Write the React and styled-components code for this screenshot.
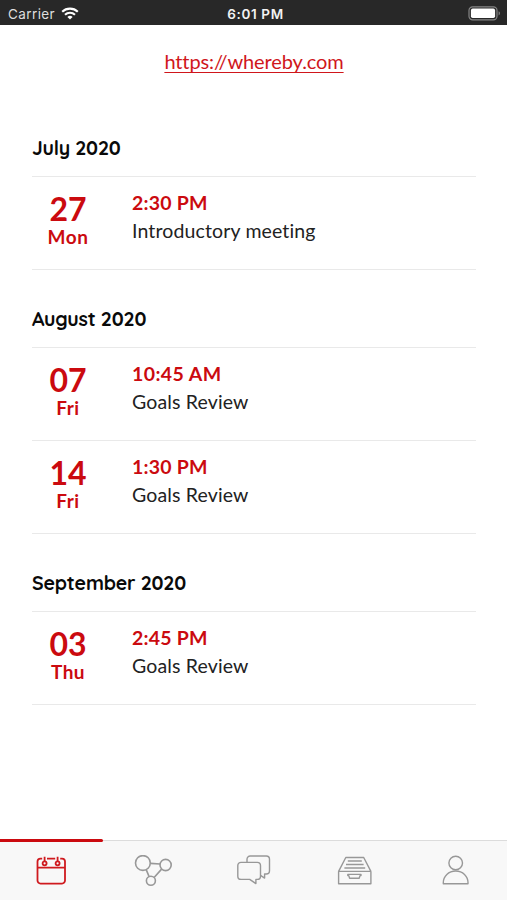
import React, { useState } from "react";
import styled, { createGlobalStyle } from "styled-components";

const GlobalStyle = createGlobalStyle`
  * {
    box-sizing: border-box;
  }
  body {
    margin: 0;
    background: #fff;
    font-family: Avenir, Lato, sans-serif;
    font-variant-ligatures: none;
  }
`;

const Screen = styled.div`
  display: flex;
  flex-direction: column;
  height: 900px;
  background: #fff;
  overflow: hidden;
`;

const StatusBar = styled.header`
  display: grid;
  grid-template-columns: 1fr auto 1fr;
  align-items: center;
  height: 25px;
  padding: 2px 6px 0 8px;
  background: #282828;
  color: #f2f2f2;
  font-family: Inter, sans-serif;
  font-size: 13px;
  flex-shrink: 0;
`;

const Carrier = styled.div`
  display: flex;
  align-items: center;
  gap: 6px;
  color: #dedede;
  font-size: 13.5px;
  letter-spacing: 0.4px;
`;

const Clock = styled.div`
  font-size: 13.5px;
  font-weight: 600;
  letter-spacing: 0.65px;
  padding-left: 2px;
`;

const Battery = styled.svg`
  justify-self: end;
`;

const Content = styled.main`
  flex: 1;
  padding: 0 31px 0 32px;
`;

const LinkRow = styled.div`
  height: 73px;
  padding: 22px 0 0 0;
  text-align: center;
  line-height: 28px;
`;

const MeetingLink = styled.a`
  color: #d0161b;
  font-size: 20px;
  letter-spacing: -0.1px;
  text-decoration: underline;
  text-decoration-thickness: 1px;
  text-underline-offset: 3px;
`;

const Month = styled.h2`
  height: 78px;
  margin: 0;
  padding-top: 36px;
  color: #0a0a0a;
  font-family: Quicksand, Lato, sans-serif;
  font-size: 19.5px;
  font-weight: 700;
  line-height: 28px;
  letter-spacing: -0.18px;
`;

const Row = styled.div`
  display: flex;
  height: ${(props) => (props.$first ? 94 : 93)}px;
  border-top: ${(props) => (props.$first ? "1px solid #e9e9e9" : "none")};
  border-bottom: 1px solid #e9e9e9;
`;

const MonthBlock = styled.section`
  margin-bottom: -1px;
`;

const DateBox = styled.div`
  width: 72px;
  padding-top: 14px;
  color: #cb0a0f;
  text-align: center;
  font-weight: 700;
`;

const Day = styled.div`
  font-size: 32px;
  line-height: 35px;
`;

const Weekday = styled.div`
  font-size: 19px;
  line-height: 22px;
  letter-spacing: 0.5px;
`;

const Info = styled.div`
  padding: 12px 0 0 28px;
  line-height: 28px;
`;

const Time = styled.div`
  color: #cb0a0f;
  font-size: 19.5px;
  font-weight: 700;
  letter-spacing: ${(props) => props.$spacing}px;
`;

const Title = styled.div`
  color: #222;
  font-size: 19.5px;
  letter-spacing: 0.14px;
`;

const TabBar = styled.nav`
  display: flex;
  height: 60px;
  border-top: 1px solid #dcdcdc;
  background: #f8f8f8;
  flex-shrink: 0;
`;

const Tab = styled.button`
  position: relative;
  display: flex;
  flex: 1;
  justify-content: center;
  padding: 14px 0 0;
  border: 0;
  background: none;
  color: ${(props) => (props.$active ? "#cf1a1f" : "#989898")};
  cursor: pointer;

  &::before {
    content: "";
    display: ${(props) => (props.$active ? "block" : "none")};
    position: absolute;
    top: -2px;
    left: 0;
    width: calc(100% + 2px);
    height: 2.5px;
    border-radius: 0 2px 2px 0;
    background: #cb0a0f;
  }
`;

const Icon = styled.svg`
  width: 40px;
  height: 32px;
  fill: none;
  stroke: currentColor;
  stroke-width: ${(props) => props.$weight || 1.4};
  stroke-linejoin: round;
`;

const CalendarIcon = () => (
  <Icon viewBox="0 0 40 32" $weight={1.8}>
    <path d="M11.2 3.6H9.5a3 3 0 0 0-3 3v19a3 3 0 0 0 3 3h21.5a3 3 0 0 0 3-3v-19a3 3 0 0 0-3-3h-1.8M16 3.6h8.2M6.5 12.6H34M13.6 1.8v4.5M26.6 1.8v4.5" />
    <circle cx="13.6" cy="8.3" r="2" />
    <circle cx="26.6" cy="8.3" r="2" />
  </Icon>
);

const NetworkIcon = () => (
  <Icon viewBox="0 0 40 32" $weight={1.6}>
    <circle cx="10.9" cy="8" r="7.4" />
    <circle cx="33.6" cy="10" r="5.6" />
    <circle cx="18.9" cy="25.7" r="4.5" />
    <path d="M18.4 8.4 28.1 9M14.2 14.6l2.9 7M29.6 14.1l-7.5 8.4" />
  </Icon>
);

const ChatIcon = () => (
  <Icon viewBox="0 0 40 32">
    <path d="M7 7.4h16.3a3.2 3.2 0 0 1 3.2 3.2v10.6a3.2 3.2 0 0 1-3.2 3.2h-1.4v4.2l-6.2-4.2H7a3.2 3.2 0 0 1-3.2-3.2V10.6A3.2 3.2 0 0 1 7 7.4z" />
    <path d="M13 7.4V4.2A3.2 3.2 0 0 1 16.2 1h16.1a3.2 3.2 0 0 1 3.2 3.2v11.6a3.2 3.2 0 0 1-3.2 3.2h-1.7v4.1L26.5 20.4" />
  </Icon>
);

const ArchiveIcon = () => (
  <Icon viewBox="0 0 40 32">
    <path d="M3.6 16.4h32.3v12.3H3.6zM3.6 16.4l7.2-13.9h17.9l7.2 13.9M12.8 6h14M11 9.5h17.6M9.4 13h20.8" />
    <path d="M12.8 19.4h13.2v1.2h-1l-.8 2.6h-9.6l-.8-2.6h-1z" />
  </Icon>
);

const ProfileIcon = () => (
  <Icon viewBox="0 0 40 32">
    <circle cx="19.7" cy="8" r="6.8" />
    <path d="M7.3 28.8v-1.2C7.3 21.2 12.6 16 19.7 16S32 21.2 32 27.6v1.2z" />
  </Icon>
);

const tabs = [
  { id: "calendar", icon: CalendarIcon },
  { id: "network", icon: NetworkIcon },
  { id: "chat", icon: ChatIcon },
  { id: "archive", icon: ArchiveIcon },
  { id: "profile", icon: ProfileIcon },
];

const months = [
  {
    name: "July 2020",
    meetings: [
      { day: "27", weekday: "Mon", time: "2:30 PM", spacing: 0.2, title: "Introductory meeting" },
    ],
  },
  {
    name: "August 2020",
    meetings: [
      { day: "07", weekday: "Fri", time: "10:45 AM", spacing: 0.4, title: "Goals Review" },
      { day: "14", weekday: "Fri", time: "1:30 PM", spacing: 0.2, title: "Goals Review" },
    ],
  },
  {
    name: "September 2020",
    meetings: [
      { day: "03", weekday: "Thu", time: "2:45 PM", spacing: 0.2, title: "Goals Review" },
    ],
  },
];

function App() {
  const [active, setActive] = useState("calendar");

  return (
    <Screen>
      <GlobalStyle />
      <StatusBar>
        <Carrier>
          Carrier
          <svg width="18" height="13" viewBox="0 0 18 13" fill="none" stroke="#fff" strokeWidth="2.1">
            <path d="M1.2 4.8a11.2 11.2 0 0 1 15.6 0M4 7.7a7.2 7.2 0 0 1 10 0" />
            <path d="M9 12.4 6.4 9.9a3.8 3.8 0 0 1 5.2 0z" fill="#fff" stroke="none" />
          </svg>
        </Carrier>
        <Clock>6:01 PM</Clock>
        <Battery width="33" height="15" viewBox="0 0 33 15">
          <rect x="1" y="0.8" width="28" height="13" rx="3.6" fill="none" stroke="#858585" strokeWidth="1.2" />
          <rect x="2.9" y="2.6" width="24.2" height="9.4" rx="1.8" fill="#fff" />
          <path d="M30.6 5.2c1.8.7 1.8 3.5 0 4.2z" fill="#858585" />
        </Battery>
      </StatusBar>

      <Content>
        <LinkRow>
          <MeetingLink href="#">https://whereby.com</MeetingLink>
        </LinkRow>
        {months.map((month) => (
          <MonthBlock key={month.name}>
            <Month>{month.name}</Month>
            {month.meetings.map((meeting, index) => (
              <Row key={meeting.day} $first={index === 0}>
                <DateBox>
                  <Day>{meeting.day}</Day>
                  <Weekday>{meeting.weekday}</Weekday>
                </DateBox>
                <Info>
                  <Time $spacing={meeting.spacing}>{meeting.time}</Time>
                  <Title>{meeting.title}</Title>
                </Info>
              </Row>
            ))}
          </MonthBlock>
        ))}
      </Content>

      <TabBar>
        {tabs.map(({ id, icon: TabIcon }) => (
          <Tab key={id} $active={id === active} onClick={() => setActive(id)}>
            <TabIcon />
          </Tab>
        ))}
      </TabBar>
    </Screen>
  );
}

export default App;
